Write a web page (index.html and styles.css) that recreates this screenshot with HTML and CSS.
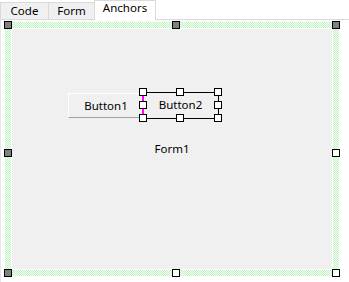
FILE: index.html
```html
<!DOCTYPE html>
<html lang="en">
<head>
<meta charset="UTF-8">
<title>Anchors</title>
<link rel="stylesheet" href="styles.css">
</head>
<body>
<div class="tabs">
<div class="tab tab-code">Code</div>
<div class="tab tab-form">Form</div>
<div class="tab tab-anchors active">Anchors</div>
</div>

<div class="designer">
<div class="frame">
<div class="form">
<div class="btn btn1">Button1</div>
<div class="btn btn2">Button2</div>
<div class="sel"></div>
<span class="grip g-l g-t"></span>
<span class="grip g-c g-t"></span>
<span class="grip g-r g-t"></span>
<span class="grip g-l g-m"></span>
<span class="grip g-r g-m"></span>
<span class="grip g-l g-b"></span>
<span class="grip g-c g-b"></span>
<span class="grip g-r g-b"></span>
<div class="caption">Form1</div>
</div>
<span class="handle locked h-l h-t"></span>
<span class="handle locked h-c h-t"></span>
<span class="handle locked h-r h-t"></span>
<span class="handle locked h-l h-m"></span>
<span class="handle h-r h-m"></span>
<span class="handle locked h-l h-b"></span>
<span class="handle h-c h-b"></span>
<span class="handle h-r h-b"></span>
</div>
</div>
</body>
</html>
```

FILE: styles.css
```css
*{margin:0;padding:0;box-sizing:border-box;}
body{width:349px;height:282px;overflow:hidden;background:#fff;color:#000;font-family:"Noto Sans","Open Sans",sans-serif;font-size:11.5px;}

/* tab strip */
.tabs{display:flex;align-items:flex-end;height:20px;border-bottom:1px solid #dadada;}
.tab{height:17px;line-height:15px;text-align:center;background:#f0f0f0;border:1px solid #dadada;border-bottom:none;margin-left:-1px;}
.tab-code{width:49px;margin-left:0;}
.tab-form{width:47px;}
.tab-anchors{width:62px;}
.tab.active{height:20px;line-height:14px;margin-bottom:-1px;background:#fff;}

/* design surface */
.designer{height:262px;padding:2px 0 0 4px;border-left:1px solid #e6e6e6;}
.frame{position:relative;width:334px;height:254px;padding:6px;background:repeating-conic-gradient(#bff3bf 0 25%,#f6fff6 0 50%) 0 0/2px 2px;}
.form{position:relative;height:100%;background:#f0f0f0;border:1px solid #fff;}
.caption{position:absolute;left:0;right:0;top:112px;line-height:15px;text-align:center;}

.btn{position:absolute;top:64px;width:75px;height:25px;line-height:23px;text-align:center;}
.btn1{left:56px;border-top:1px solid #fff;border-left:1px solid #fff;border-bottom:1px solid #a0a0a0;}
.btn2{left:131px;}
.sel{position:absolute;left:130px;top:63px;width:77px;height:27px;border:1px solid #000;border-left:2px solid #f0f;}

/* control grips */
.grip{position:absolute;width:8px;height:8px;border:1px solid #000;background:#fff;}
.g-l{left:127px;}
.g-c{left:164px;}
.g-r{left:202px;}
.g-t{top:59px;}
.g-m{top:72px;}
.g-b{top:85px;}

/* form handles */
.handle{position:absolute;width:8px;height:8px;border:1px solid #000;background:#fff;}
.handle.locked{background:#808080;}
.h-l{left:-1px;}
.h-c{left:167px;}
.h-r{left:327px;}
.h-t{top:-1px;}
.h-m{top:127px;}
.h-b{top:247px;}
```
